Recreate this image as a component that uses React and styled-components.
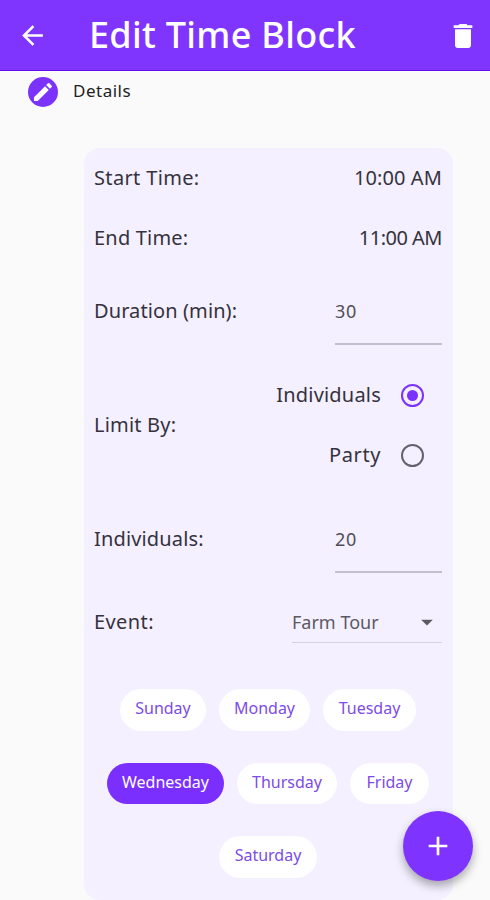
import React, { useState } from 'react';
import styled, { createGlobalStyle } from 'styled-components';
import { MdArrowBack, MdDelete, MdEdit, MdAdd, MdArrowDropDown } from 'react-icons/md';

const GlobalStyle = createGlobalStyle`
  body {
    margin: 0;
    background: #fafafa;
    font-family: 'Noto Sans', 'Open Sans', sans-serif;
    color: #35323d;
  }
`;

const Screen = styled.div`
  position: relative;
  width: 490px;
  height: 900px;
  overflow: hidden;
  background: #fafafa;
`;

const AppBar = styled.header`
  display: flex;
  align-items: center;
  height: 71px;
  padding: 0 11px 0 17px;
  box-sizing: border-box;
  background: #8035ff;
  border-bottom: 1px solid #6410e6;
  color: white;

  svg {
    flex: none;
    margin-top: 1px;
  }
`;

const Title = styled.h1`
  flex: 1;
  margin: 0 0 1px 41px;
  font-size: 36px;
  font-weight: 500;
  line-height: 48px;
  letter-spacing: 0.3px;
  white-space: nowrap;
`;

const Step = styled.div`
  display: flex;
  align-items: center;
  height: 42px;
  padding-left: 28px;
`;

const StepIcon = styled.span`
  display: flex;
  align-items: center;
  justify-content: center;
  width: 30px;
  height: 30px;
  margin-right: 15px;
  border-radius: 50%;
  background: #7b32fa;
  color: white;
`;

const StepLabel = styled.span`
  padding-bottom: 3px;
  font-size: 17px;
  letter-spacing: 0.5px;
  color: #222;
`;

const Card = styled.section`
  width: 369px;
  height: 752px;
  margin: 35px 0 0 84px;
  padding: 0 11px 0 10px;
  box-sizing: border-box;
  border-radius: 16px;
  background: #f4f0ff;
`;

const Row = styled.div`
  display: flex;
  align-items: center;
  justify-content: space-between;
  height: ${(props) => props.$height}px;
`;

const Text = styled.span`
  font-size: 20px;
  line-height: 28px;
  letter-spacing: ${(props) => props.$spacing || 0}px;
  white-space: nowrap;
`;

const Field = styled.div`
  display: flex;
  align-items: center;
  width: 107px;
  height: 68px;
  padding-top: 1px;
  box-sizing: border-box;
  border-bottom: 2px solid #c3bfcd;
  font-size: 18px;
  letter-spacing: 0.6px;
  color: #504d58;
`;

const Select = styled.div`
  display: flex;
  align-items: center;
  justify-content: space-between;
  width: 150px;
  height: 42px;
  padding-right: 1px;
  box-sizing: border-box;
  border-bottom: 1px solid #d5d1df;
  font-size: 18px;
  color: #5c5963;
`;

const RadioGroup = styled.div`
  display: flex;
  flex-direction: column;
`;

const RadioOption = styled.div`
  display: flex;
  align-items: center;
  justify-content: flex-end;
  gap: 20px;
  height: 60px;
  padding-right: 18px;
  cursor: pointer;
`;

const RadioCircle = styled.span`
  display: flex;
  align-items: center;
  justify-content: center;
  width: 23px;
  height: 23px;
  box-sizing: border-box;
  border: 2px solid ${(props) => (props.$checked ? '#7b32fa' : '#65626c')};
  border-radius: 50%;

  &::after {
    content: '';
    width: 11px;
    height: 11px;
    border-radius: 50%;
    background: ${(props) => (props.$checked ? '#7b32fa' : 'transparent')};
  }
`;

const Days = styled.div`
  display: flex;
  flex-wrap: wrap;
  justify-content: center;
  gap: 32px 13px;
  padding-top: 27px;
`;

const DayChip = styled.button`
  width: ${(props) => props.$width}px;
  height: 41.5px;
  padding: 0 0 3px;
  border: none;
  border-radius: 21px;
  background: ${(props) => (props.$selected ? '#7b2fff' : 'white')};
  color: ${(props) => (props.$selected ? 'white' : '#7d4be6')};
  font-family: inherit;
  font-size: 16px;
  white-space: nowrap;
  cursor: pointer;
`;

const AddButton = styled.button`
  position: absolute;
  left: 403px;
  top: 811px;
  display: flex;
  align-items: center;
  justify-content: center;
  width: 70px;
  height: 70px;
  padding: 0;
  border: none;
  border-radius: 50%;
  background: #7f33ff;
  color: white;
  box-shadow: 0 5px 10px rgba(0, 0, 0, 0.32);
`;

const limits = [
  { name: 'Individuals', spacing: 0.2 },
  { name: 'Party', spacing: 0.6 },
];

const days = [
  { name: 'Sunday', width: 86 },
  { name: 'Monday', width: 91 },
  { name: 'Tuesday', width: 93 },
  { name: 'Wednesday', width: 117 },
  { name: 'Thursday', width: 100 },
  { name: 'Friday', width: 79 },
  { name: 'Saturday', width: 98 },
];

const App = () => {
  const [limitBy, setLimitBy] = useState('Individuals');
  const [selectedDay, setSelectedDay] = useState('Wednesday');

  return (
    <Screen>
      <GlobalStyle />
      <AppBar>
        <MdArrowBack size={31} />
        <Title>Edit Time Block</Title>
        <MdDelete size={32} />
      </AppBar>

      <Step>
        <StepIcon><MdEdit size={24} /></StepIcon>
        <StepLabel>Details</StepLabel>
      </Step>

      <Card>
        <Row $height={60}>
          <Text $spacing={0.35}>Start Time:</Text>
          <Text $spacing={0.1}>10:00 AM</Text>
        </Row>
        <Row $height={60}>
          <Text $spacing={0.2}>End Time:</Text>
          <Text $spacing={-0.5}>11:00 AM</Text>
        </Row>
        <Row $height={86}>
          <Text $spacing={0.1}>Duration (min):</Text>
          <Field>30</Field>
        </Row>
        <Row $height={142}>
          <Text $spacing={0.2}>Limit By:</Text>
          <RadioGroup>
            {limits.map((option) => (
              <RadioOption key={option.name} onClick={() => setLimitBy(option.name)}>
                <Text $spacing={option.spacing}>{option.name}</Text>
                <RadioCircle $checked={limitBy === option.name} />
              </RadioOption>
            ))}
          </RadioGroup>
        </Row>
        <Row $height={86}>
          <Text $spacing={0.15}>Individuals:</Text>
          <Field>20</Field>
        </Row>
        <Row $height={80}>
          <Text $spacing={0.4}>Event:</Text>
          <Select>
            Farm Tour
            <MdArrowDropDown size={28} />
          </Select>
        </Row>
        <Days>
          {days.map((day) => (
            <DayChip
              key={day.name}
              $width={day.width}
              $selected={selectedDay === day.name}
              onClick={() => setSelectedDay(day.name)}
            >
              {day.name}
            </DayChip>
          ))}
        </Days>
      </Card>

      <AddButton>
        <MdAdd size={32} />
      </AddButton>
    </Screen>
  );
};

export default App;
